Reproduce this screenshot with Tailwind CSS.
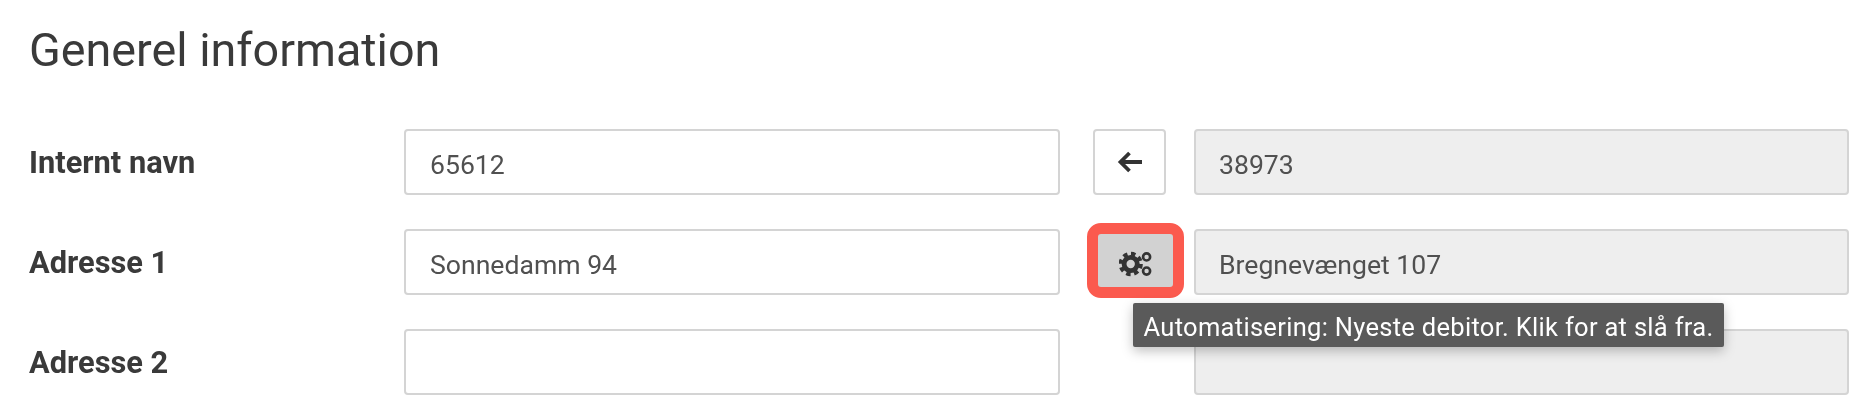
<!DOCTYPE html>
<html>
<head>
    <title>Generel information</title>
    <script src="https://cdn.jsdelivr.net/npm/@tailwindcss/browser@4"></script>
</head>
<body class="bg-white overflow-hidden font-['Roboto',sans-serif] text-[#3a3a3a]">
    <div class="w-[1870px] h-[414px] pl-[29px] pr-[21px] pt-[24px] blur-[0.6px]">
        <h2 class="text-[46.7px] leading-[52px] font-normal mb-[53px]">Generel information</h2>

        <div class="flex flex-col gap-[34px]">
            <div class="flex items-center h-[66px]">
                <label class="w-[375px] pt-[3px] text-[30.8px] font-bold">Internt navn</label>
                <input type="text" value="65612" class="w-[656px] h-[66px] px-[24px] pt-[4px] text-[26.6px] text-[#505050] bg-white border-2 border-[#d4d4d4] rounded-[4px]">
                <button class="ml-[33px] w-[73px] h-[66px] flex items-center justify-center bg-white border-2 border-[#d4d4d4] rounded-[4px]">
                    <svg width="26" height="22" viewBox="0 0 26 22" fill="none" stroke="#333" stroke-width="3.8"><path d="M25 11H4M12.5 2L3.5 11L12.5 20"/></svg>
                </button>
                <input type="text" value="38973" disabled class="ml-[28px] w-[655px] h-[66px] px-[23px] pt-[4px] text-[26.6px] text-[#505050] bg-[#eee] border-2 border-[#d4d4d4] rounded-[4px]">
            </div>

            <div class="flex items-center h-[66px]">
                <label class="w-[375px] pt-[3px] text-[30.8px] font-bold">Adresse 1</label>
                <input type="text" value="Sonnedamm 94" class="w-[656px] h-[66px] px-[24px] pt-[4px] text-[26.6px] text-[#505050] bg-white border-2 border-[#d4d4d4] rounded-[4px]">
                <div class="relative ml-[33px] w-[73px] h-[66px]">
                    <button class="absolute left-[-6px] top-[-6px] w-[97px] h-[75px] flex items-center justify-center pt-[6px] bg-[#d2d2d2] border-[11px] border-[#fb5a4e] rounded-[14px]">
                        <svg width="34" height="30" viewBox="0 0 38 34" fill="none" stroke="#333">
                            <circle cx="13" cy="17" r="7.5" stroke-width="5.5"/>
                            <circle cx="13" cy="17" r="11.5" stroke-width="4.5" stroke-dasharray="5 4.03"/>
                            <circle cx="31" cy="9" r="4" stroke-width="3"/>
                            <circle cx="31" cy="25" r="4" stroke-width="3"/>
                        </svg>
                    </button>
                </div>
                <input type="text" value="Bregnevænget 107" disabled class="ml-[28px] w-[655px] h-[66px] px-[23px] pt-[4px] text-[26.6px] text-[#505050] bg-[#eee] border-2 border-[#d4d4d4] rounded-[4px]">
            </div>

            <div class="flex items-center h-[66px]">
                <label class="w-[375px] pt-[3px] text-[30.8px] font-bold">Adresse 2</label>
                <input type="text" class="w-[656px] h-[66px] px-[24px] pt-[4px] text-[26.6px] text-[#505050] bg-white border-2 border-[#d4d4d4] rounded-[4px]">
                <div class="relative ml-[33px] w-[73px] h-[66px]">
                    <div class="absolute left-[40px] top-[-26px] w-[591px] h-[44px] pt-[5px] z-10 flex items-center justify-center whitespace-nowrap bg-[#5a5a5a] text-white text-[25.5px] tracking-[0.3px] rounded-[2px] shadow-[0_4px_12px_rgba(0,0,0,0.25)]">Automatisering: Nyeste debitor. Klik for at slå fra.</div>
                </div>
                <input type="text" disabled class="ml-[28px] w-[655px] h-[66px] px-[23px] pt-[4px] text-[26.6px] text-[#505050] bg-[#eee] border-2 border-[#d4d4d4] rounded-[4px]">
            </div>
        </div>
    </div>
</body>
</html>
